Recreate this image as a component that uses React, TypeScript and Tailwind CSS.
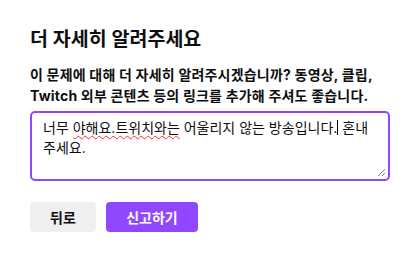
export default function App() {
  return (
    <div
      className="min-h-screen w-[419px] bg-white px-[30px] pt-[26px] text-[#0e0e10]"
      style={{ fontFamily: 'Inter, "Noto Sans CJK KR", sans-serif' }}
    >
      {/* ── Header ── */}
      <h1 className="text-[19.5px] font-semibold leading-[26px]">더 자세히 알려주세요</h1>

      <p className="mt-[12px] text-[14px] font-bold leading-[21px] tracking-[0.2px]">
        이 문제에 대해 더 자세히 알려주시겠습니까? 동영상, 클립, Twitch 외부 콘텐츠 등의 링크를 추가해 주셔도 좋습니다.
      </p>

      {/* ── Textarea ── */}
      <div className="relative mt-[5px] h-[70px] w-[360px] rounded-[5px] border-2 border-[#9147ff] px-[11px] py-[5px] text-[14px] leading-[20px] text-[#0e0e10]">
        너무{" "}
        <span className="underline decoration-wavy decoration-red-500 decoration-1 underline-offset-2">
          야해요.트위치와는
        </span>{" "}
        어울리지 않는 방송입니다.
        <span className="inline-block h-[15px] w-px translate-y-[2px] bg-black" /> 혼내주세요.
        <svg
          className="absolute bottom-[2px] right-[2px]"
          width="9"
          height="9"
          viewBox="0 0 9 9"
        >
          <path d="M8 1L1 8M8 5L5 8" stroke="#8a8a8a" strokeWidth="1" />
        </svg>
      </div>

      {/* ── Actions ── */}
      <div className="mt-[21px] flex gap-[10px]">
        <button className="flex h-[30px] w-[66px] items-center justify-center rounded-[4px] bg-[#efeff1] text-[14px] font-bold text-[#0e0e10]">
          뒤로
        </button>
        <button className="flex h-[30px] w-[92px] items-center justify-center rounded-[4px] bg-[#9147ff] text-[14px] font-bold text-white">
          신고하기
        </button>
      </div>
    </div>
  );
}
